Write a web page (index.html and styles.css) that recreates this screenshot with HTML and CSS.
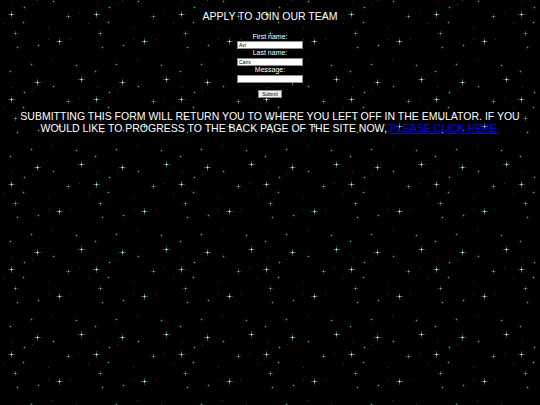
FILE: index.html
```html
<!DOCTYPE html>
<html lang="en">
<head>
<meta charset="utf-8">
<title>Apply to join our team</title>
<link rel="stylesheet" href="styles.css">
</head>
<body>
<main class="page">
  <h1 class="title">APPLY TO JOIN OUR TEAM</h1>
  <form class="apply">
    <label class="apply-label" for="fname">First name:</label>
    <input class="apply-field" id="fname" type="text" value="Avi">
    <label class="apply-label" for="lname">Last name:</label>
    <input class="apply-field" id="lname" type="text" value="Cairs">
    <label class="apply-label" for="msg">Message:</label>
    <input class="apply-field" id="msg" type="text">
    <button class="apply-submit" type="button">Submit</button>
  </form>
  <p class="note">SUBMITTING THIS FORM WILL RETURN YOU TO WHERE YOU LEFT OFF IN THE EMULATOR. IF YOU WOULD LIKE TO PROGRESS TO THE BACK PAGE OF THE SITE NOW, <a class="note-link" href="#">PLEASE CLICK HERE.</a></p>
</main>
</body>
</html>
```

FILE: styles.css
```css
html, body {
  margin: 0;
  min-height: 100%;
}

/* starfield: an 85px tile of twinkling sparkles */
body {
  background-color: #000;
  background-image: url("data:image/svg+xml;utf8,<svg xmlns='http://www.w3.org/2000/svg' width='85' height='85'><defs><g id='b'><path d='M-3 0h7v1h-7zM0-3h1v7h-1z' fill='rgb(28,78,68)'/><path d='M-1 0h3v1h-3zM0-1h1v3h-1z' fill='rgb(95,170,148)'/><rect width='1' height='1' fill='rgb(200,245,228)'/></g><g id='m'><path d='M-2 0h5v1h-5zM0-2h1v5h-1z' fill='rgb(26,68,60)'/><rect width='1' height='1' fill='rgb(140,205,185)'/></g><g id='s'><path d='M-1 0h3v1h-3zM0-1h1v3h-1z' fill='rgb(20,50,44)'/><rect width='1' height='1' fill='rgb(90,150,135)'/></g><rect id='d' width='1' height='1' fill='rgb(30,50,46)'/></defs><use href='%23b' x='37' y='82'/><use href='%23b' x='37' y='-3'/><use href='%23b' x='11' y='14'/><use href='%23b' x='59' y='41'/><use href='%23b' x='81' y='79'/><use href='%23m' x='68' y='16'/><use href='%23m' x='15' y='33'/><use href='%23s' x='23' y='22'/><use href='%23s' x='24' y='7'/><use href='%23s' x='38' y='45'/><use href='%23s' x='17' y='47'/><use href='%23s' x='31' y='64'/><use href='%23s' x='76' y='65'/><use href='%23s' x='10' y='71'/><use href='%23s' x='53' y='1'/><use href='%23d' x='12' y='2'/><use href='%23d' x='32' y='4'/><use href='%23d' x='3' y='23'/><use href='%23d' x='79' y='13'/><use href='%23d' x='48' y='27'/><use href='%23d' x='70' y='39'/><use href='%23d' x='48' y='39'/><use href='%23d' x='52' y='60'/></svg>");
  background-repeat: repeat;
  background-position: 0 0;
  color: #fff;
  font-family: "Liberation Sans", Arial, sans-serif;
}

.page {
  display: flex;
  flex-direction: column;
  align-items: center;
  text-align: center;
}

.title {
  margin: 0;
  padding-top: 10px;
  font-size: 10.5px;
  line-height: 13px;
  font-weight: normal;
}

.apply {
  display: flex;
  flex-direction: column;
  align-items: center;
  margin-top: 9.5px;
}

.apply-label {
  display: block;
  font-size: 7px;
  line-height: 8.4px;
}

.apply-field {
  box-sizing: border-box;
  width: 66px;
  height: 8.4px;
  margin: 0;
  padding: 0 1px;
  border: 1px solid #8a8a8a;
  background: #fff;
  color: #000;
  font-family: "Liberation Sans", Arial, sans-serif;
  font-size: 5px;
  line-height: 6px;
}

.apply-submit {
  box-sizing: border-box;
  width: 24px;
  height: 8.4px;
  margin-top: 7px;
  padding: 0;
  border: 1px solid #8a8a8a;
  background: #efefef;
  color: #000;
  font-family: "Liberation Sans", Arial, sans-serif;
  font-size: 5px;
  line-height: 6px;
}

.note {
  margin: 12px 0 0;
  padding: 0 14px;
  font-size: 10.5px;
  line-height: 12px;
}

.note-link {
  color: #0000ee;
  text-decoration: underline;
}
```
